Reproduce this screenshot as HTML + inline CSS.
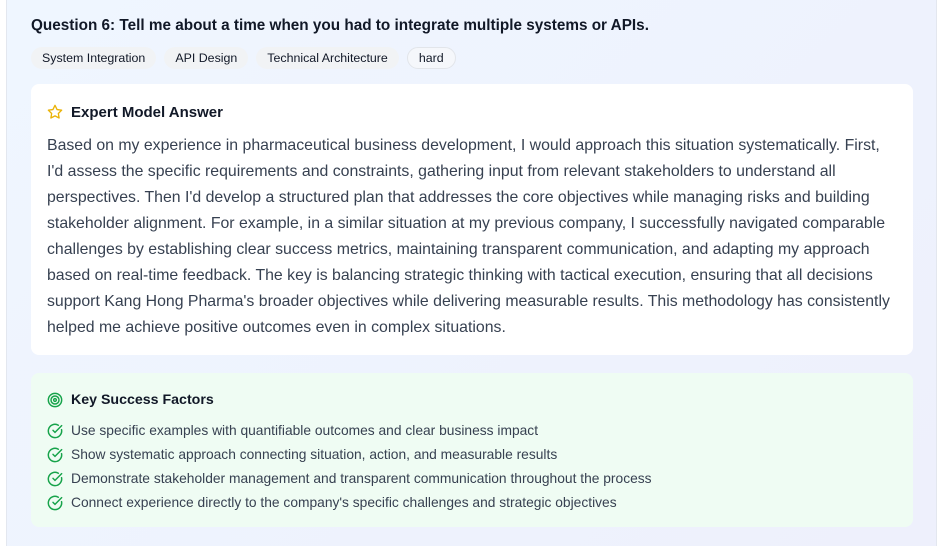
<!DOCTYPE html>
<html style="width:940px;height:546px;overflow:hidden"><head><meta charset="utf-8"><style>
*{box-sizing:border-box;margin:0;padding:0}
body{width:940px;height:546px;overflow:hidden;background:#fff;font-family:"Liberation Sans",sans-serif;color:#111827}
.wrap{position:relative;width:940px;height:546px;overflow:hidden}
.outer{position:absolute;left:6px;top:-10px;width:931px;height:570px;background:linear-gradient(135deg,#eff6ff,#eef0fc);border:1px solid #e3e7ef;border-radius:8px}
.q{position:absolute;left:31px;top:17px;font-size:15.3px;font-weight:bold;color:#111827;white-space:nowrap}
.tags{position:absolute;left:31px;top:47px;display:flex;gap:8px}
.tag{height:22px;line-height:22px;padding:0 11px;border-radius:11px;background:#f1f3f5;font-size:12.4px;color:#111827;white-space:nowrap}
.tag.h{background:#f5f7fb;border:1px solid #e2e5ea;line-height:20px}
.card{position:absolute;left:31px;top:84px;width:882px;height:271px;background:#fff;border-radius:8px}
.ct{position:absolute;top:104px;font-size:15px;font-weight:bold;white-space:nowrap}
.body{position:absolute;left:47px;top:133px;font-size:15.85px;line-height:26px;color:#374151}
.body div{white-space:nowrap}
.g{position:absolute;left:31px;top:373px;width:882px;height:154px;background:#effcf3;border-radius:8px}
.gt{position:absolute;left:71px;top:392px;font-size:14.2px;font-weight:bold;white-space:nowrap}
.li{position:absolute;left:71px;font-size:13.8px;color:#374151;white-space:nowrap}
.ic{position:absolute;left:47px}
</style></head><body><div class="wrap">
<div class="outer"></div>
<div class="q">Question 6: Tell me about a time when you had to integrate multiple systems or APIs.</div>
<div class="tags"><span class="tag">System Integration</span><span class="tag">API Design</span><span class="tag">Technical Architecture</span><span class="tag h">hard</span></div>
<div class="card"></div>
<svg class="ic" style="top:104px" width="16" height="16" viewBox="0 0 24 24" fill="none" stroke="#eab308" stroke-width="2" stroke-linejoin="round"><path d="M12 2l3.1 6.3 6.9 1-5 4.9 1.2 6.8L12 17.8 5.8 21l1.2-6.8-5-4.9 6.9-1z"/></svg>
<div class="ct" style="left:71px">Expert Model Answer</div>
<div class="body">
<div>Based on my experience in pharmaceutical business development, I would approach this situation systematically. First,</div>
<div>I'd assess the specific requirements and constraints, gathering input from relevant stakeholders to understand all</div>
<div>perspectives. Then I'd develop a structured plan that addresses the core objectives while managing risks and building</div>
<div>stakeholder alignment. For example, in a similar situation at my previous company, I successfully navigated comparable</div>
<div>challenges by establishing clear success metrics, maintaining transparent communication, and adapting my approach</div>
<div>based on real-time feedback. The key is balancing strategic thinking with tactical execution, ensuring that all decisions</div>
<div>support Kang Hong Pharma's broader objectives while delivering measurable results. This methodology has consistently</div>
<div>helped me achieve positive outcomes even in complex situations.</div>
</div>
<div class="g"></div>
<svg class="ic" style="top:392px" width="16" height="16" viewBox="0 0 24 24" fill="none" stroke="#16a34a" stroke-width="2.2"><circle cx="12" cy="12" r="10"/><circle cx="12" cy="12" r="6"/><circle cx="12" cy="12" r="2"/></svg>
<div class="gt">Key Success Factors</div>
<svg class="ic" style="top:423px" width="16" height="16" viewBox="0 0 24 24" fill="none" stroke="#16a34a" stroke-width="2.2" stroke-linecap="round"><path d="M21.8 10A10 10 0 1 1 17 3.3"/><path d="M9 11l3 3L22 4"/></svg>
<div class="li" style="top:423px">Use specific examples with quantifiable outcomes and clear business impact</div>
<svg class="ic" style="top:447px" width="16" height="16" viewBox="0 0 24 24" fill="none" stroke="#16a34a" stroke-width="2.2" stroke-linecap="round"><path d="M21.8 10A10 10 0 1 1 17 3.3"/><path d="M9 11l3 3L22 4"/></svg>
<div class="li" style="top:447px">Show systematic approach connecting situation, action, and measurable results</div>
<svg class="ic" style="top:471px" width="16" height="16" viewBox="0 0 24 24" fill="none" stroke="#16a34a" stroke-width="2.2" stroke-linecap="round"><path d="M21.8 10A10 10 0 1 1 17 3.3"/><path d="M9 11l3 3L22 4"/></svg>
<div class="li" style="top:471px">Demonstrate stakeholder management and transparent communication throughout the process</div>
<svg class="ic" style="top:495px" width="16" height="16" viewBox="0 0 24 24" fill="none" stroke="#16a34a" stroke-width="2.2" stroke-linecap="round"><path d="M21.8 10A10 10 0 1 1 17 3.3"/><path d="M9 11l3 3L22 4"/></svg>
<div class="li" style="top:495px">Connect experience directly to the company's specific challenges and strategic objectives</div>
</div></body></html>
